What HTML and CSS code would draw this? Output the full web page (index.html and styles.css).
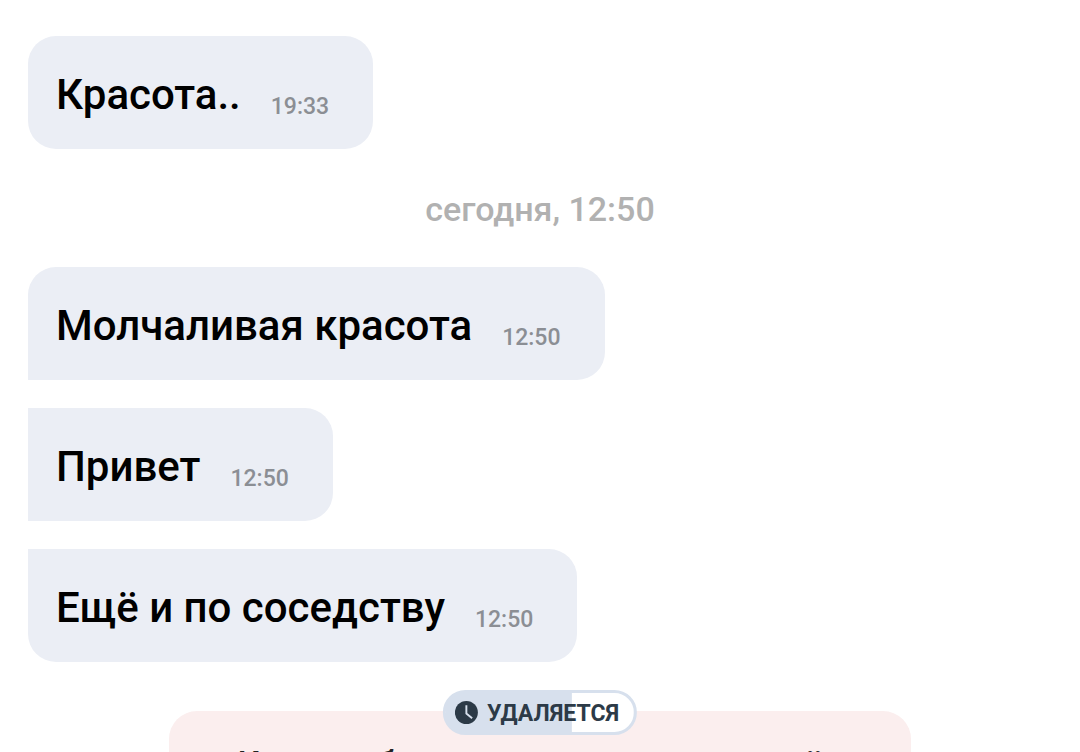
FILE: index.html
```html
<!DOCTYPE html>
<html lang="ru">
<head>
    <meta charset="UTF-8">
    <meta name="viewport" content="width=device-width, initial-scale=1.0">
    <title>Чат</title>
    <link rel="stylesheet" href="styles.css">
</head>
<body>
    <main class="chat">
        <div class="message">
            <p class="text">Красота..</p>
            <time class="time">19:33</time>
        </div>
        <div class="date">сегодня, 12:50</div>
        <div class="group">
            <div class="message">
                <p class="text">Молчаливая красота</p>
                <time class="time">12:50</time>
            </div>
            <div class="message">
                <p class="text">Привет</p>
                <time class="time">12:50</time>
            </div>
            <div class="message">
                <p class="text">Ещё и по соседству</p>
                <time class="time">12:50</time>
            </div>
        </div>
        <section class="notice">
            <div class="badge">
                <svg class="clock" viewBox="0 0 24 24" aria-hidden="true">
                    <circle cx="12" cy="12" r="12" fill="#2c3a47"/>
                    <path d="M12 4.5V13l6 5" fill="none" stroke="#d7e0ed" stroke-width="2"/>
                </svg>
                <span>УДАЛЯЕТСЯ</span>
            </div>
            <p class="notice-text">Контакт будет автоматически удалён</p>
        </section>
    </main>
</body>
</html>
```

FILE: styles.css
```css
* {
    box-sizing: border-box;
}
html {
    height: 100%;
    overflow: hidden;
}
body {
    height: 100%;
    margin: 0;
    overflow: hidden;
    background-color: #fff;
    font-family: Roboto, sans-serif;
    font-weight: 500;
}
p {
    margin: 0;
}
.chat {
    padding: 36px 28px 0;
}
.message {
    display: flex;
    align-items: flex-end;
    gap: 30px;
    width: fit-content;
    padding: 33px 44px 29px 28px;
    background-color: #ebeef5;
    border-radius: 28px;
}
.text {
    color: #000;
    font-size: 42px;
    line-height: 51px;
}
.time {
    color: #8b8e94;
    font-size: 23px;
    line-height: 27px;
}
.date {
    padding: 41px 0 39px;
    color: #b1b1b1;
    font-size: 34px;
    line-height: 38px;
    text-align: center;
}
.group {
    display: flex;
    flex-direction: column;
    gap: 28px;
}
.group .message:not(:last-child) {
    border-bottom-left-radius: 0;
}
.group .message:not(:first-child) {
    border-top-left-radius: 0;
}
.notice {
    position: relative;
    max-width: 742px;
    margin: 49px auto 0;
    padding: 32px 28px;
    background-color: #fbeeee;
    border-radius: 28px;
    text-align: center;
}
.badge {
    position: absolute;
    top: -21px;
    left: 50%;
    transform: translateX(-50%);
    display: flex;
    align-items: center;
    gap: 9px;
    height: 45px;
    padding: 1px 15px 0 9px;
    border: 3px solid #d7e0ed;
    border-radius: 23px;
    background: linear-gradient(to right, #d7e0ed 67%, #fff 67%);
    color: #2c3a47;
    font-size: 23px;
    font-weight: 700;
    line-height: 27px;
}
.clock {
    width: 23px;
    height: 23px;
    margin-bottom: 2px;
}
.notice-text {
    color: #222;
    font-size: 34px;
    line-height: 40px;
}
```
